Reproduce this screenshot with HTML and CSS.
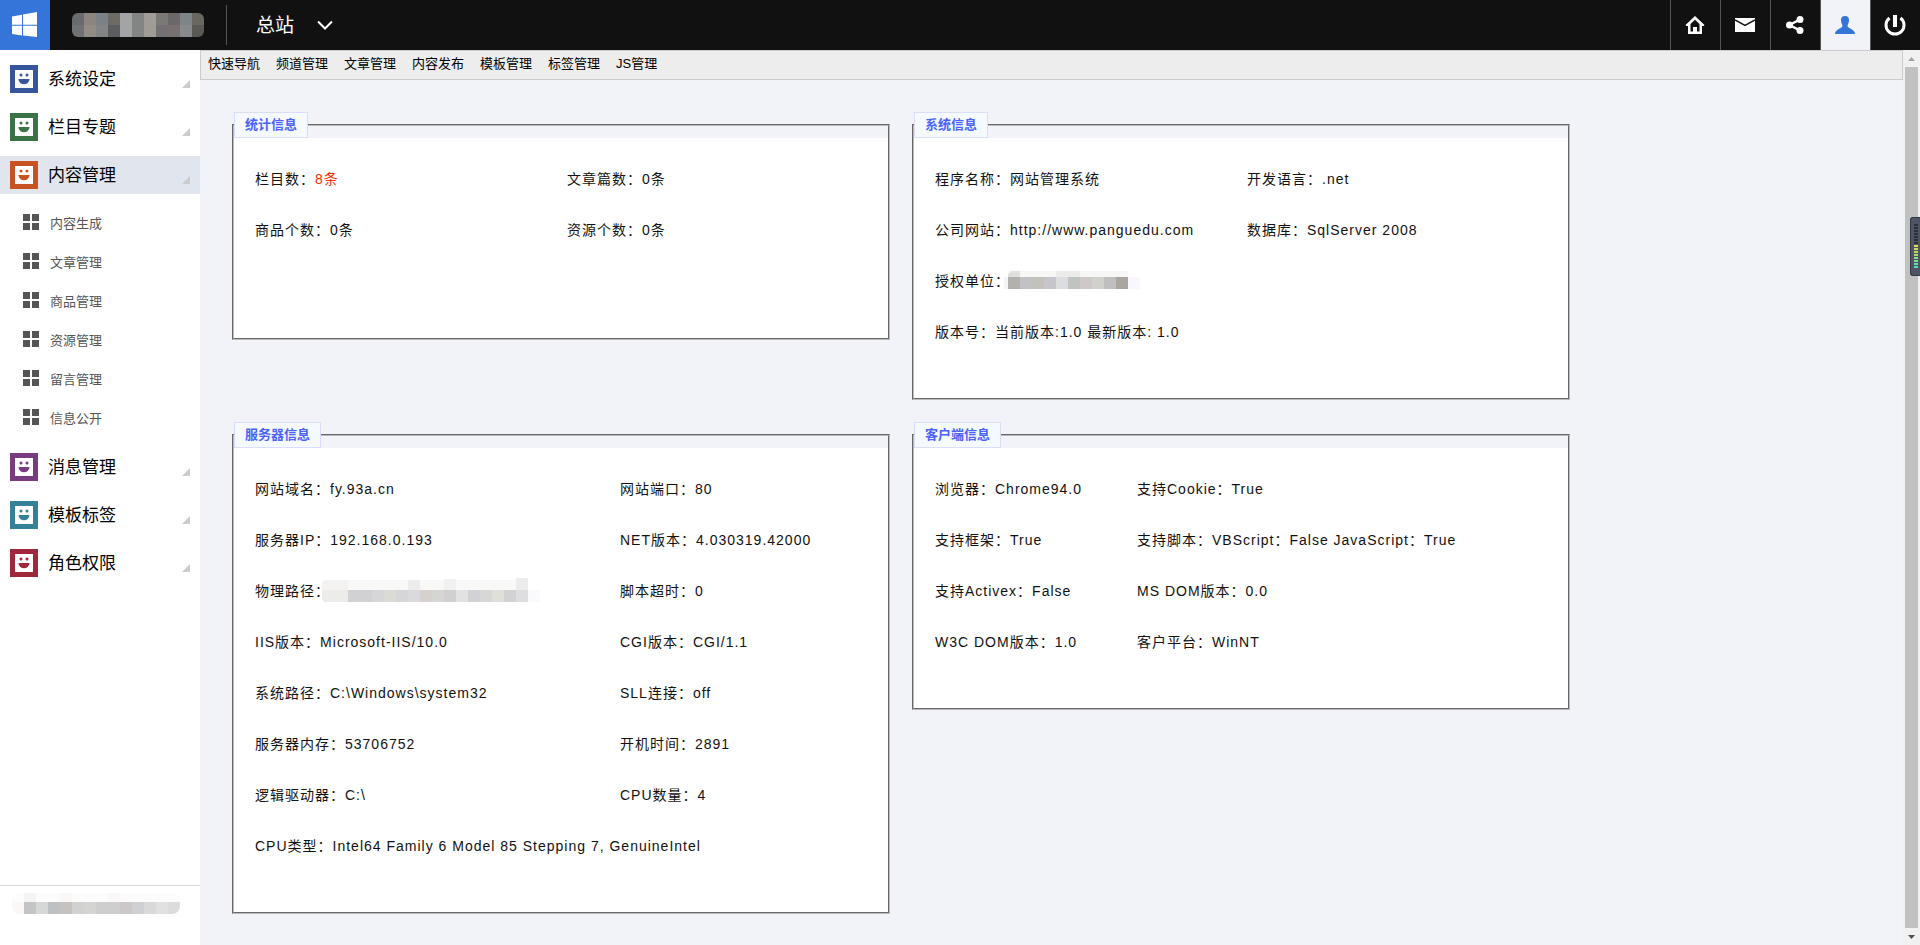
FILE: index.html
```
<!DOCTYPE html>
<html lang="zh-CN">
<head>
<meta charset="utf-8">
<title>网站管理系统</title>
<link rel="stylesheet" href="styles.css">
</head>
<body>
<svg class="defs" width="0" height="0" aria-hidden="true">
  <symbol id="face" viewBox="0 0 18 18">
    <rect width="18" height="18" fill="#fff"/>
    <circle cx="6" cy="5" r="1.500" fill="currentColor"/>
    <circle cx="12" cy="5" r="1.500" fill="currentColor"/>
    <path d="M3.500 9h11a5.500 5.200 0 0 1-11 0z" fill="currentColor"/>
  </symbol>
  <symbol id="tiles" viewBox="0 0 18 18">
    <path d="M1 1h7v7H1zM10 1h7v7h-7zM1 10h7v7H1zM10 10h7v7h-7z" fill="currentColor"/>
  </symbol>
</svg>
<header class="topbar">
  <a class="logo" href="#" aria-label="首页">
    <svg width="26" height="26" viewBox="0 0 26 26" fill="#fff"><path d="M0 4.500l10-1.700v10H0zM11 2.500L25 0v12.800H11zM0 13.800h10v9.700L0 22zM11 13.800h14V25l-14-1.500z"/></svg>
  </a>
  <svg class="site-mask" width="132" height="24" viewBox="0 0 132 24" shape-rendering="crispEdges" aria-hidden="true">
    <path fill="#676b6f" d="M0 0h12v12H0z"/><path fill="#8b8580" d="M12 0h12v12H12z"/><path fill="#7b8287" d="M24 0h12v12H24z"/><path fill="#6d6b66" d="M36 0h12v12H36z"/><path fill="#a2a4a5" d="M48 0h12v24H48z"/><path fill="#838584" d="M60 0h12v24H60z"/><path fill="#a09b95" d="M72 0h12v24H72z"/><path fill="#7a7974" d="M84 0h12v12H84z"/><path fill="#6c6769" d="M96 0h12v12H96z"/><path fill="#7e8588" d="M108 0h12v12h-12z"/><path fill="#6a6760" d="M120 0h12v12h-12z"/>
    <path fill="#6e7275" d="M0 12h12v12H0z"/><path fill="#918c84" d="M12 12h12v12H12z"/><path fill="#818483" d="M24 12h12v12H24z"/><path fill="#5c5d60" d="M36 12h12v12H36z"/><path fill="#727073" d="M84 12h12v12H84z"/><path fill="#767170" d="M96 12h12v12H96z"/><path fill="#88898c" d="M108 12h12v12h-12z"/><path fill="#5a5955" d="M120 12h12v12h-12z"/>
  </svg>
  <button class="site-switch" type="button"><span class="label">总站</span>
    <svg width="16" height="10" viewBox="0 0 16 10" fill="none" stroke="#fff" stroke-width="2"><path d="M1 1.500l7 7 7-7"/></svg>
  </button>
  <nav class="tools" aria-label="工具">
    <a href="#" aria-label="首页"><svg width="20" height="20" viewBox="0 0 20 20"><path d="M10 1l9.500 9-1 1H17v8H3v-8H1.500l-1-1zM10 4.800L5.500 9v7.500H8V12h4v4.500h2.500V9z" fill="#fff" fill-rule="evenodd"/></svg></a>
    <a href="#" aria-label="邮件"><svg width="20" height="20" viewBox="0 0 20 20"><path d="M0 3h20v14H0z" fill="#fff"/><path d="M0 5l10 5.500L20 5" fill="none" stroke="#111" stroke-width="1.500"/></svg></a>
    <a href="#" aria-label="分享"><svg width="20" height="20" viewBox="0 0 20 20"><path d="M15 4.500L4.500 10 15 15.500" fill="none" stroke="#fff" stroke-width="2.500"/><g fill="#fff"><circle cx="4.500" cy="10" r="3.500"/><circle cx="15" cy="4.500" r="3.500"/><circle cx="15" cy="15.500" r="3.500"/></g></svg></a>
    <a class="current" href="#" aria-label="用户"><svg width="20" height="20" viewBox="0 0 20 20"><path d="M10 1c3 0 4.200 2 4 4.500-.2 3-1.500 4-1.500 5.500 0 2.500 7.500 3 7.500 8H0c0-5 7.500-5.500 7.500-8 0-1.500-1.300-2.500-1.500-5.500C5.800 3 7 1 10 1z" fill="#3475d9"/></svg></a>
    <a href="#" aria-label="退出"><svg width="22" height="22" viewBox="0 0 22 22" fill="none" stroke="#fff" stroke-width="3"><path d="M5.500 4a9 9 0 1 0 11 0"/><path d="M11 1v12" stroke-width="4"/></svg></a>
  </nav>
</header>
<div class="shell">
  <aside class="sidebar">
    <nav class="menu" aria-label="主菜单">
      <a class="menu-item" href="#"><span class="badge blue"><svg width="18" height="18"><use href="#face"/></svg></span><span class="label">系统设定</span></a>
      <a class="menu-item" href="#"><span class="badge green"><svg width="18" height="18"><use href="#face"/></svg></span><span class="label">栏目专题</span></a>
      <a class="menu-item open" href="#"><span class="badge orange"><svg width="18" height="18"><use href="#face"/></svg></span><span class="label">内容管理</span></a>
      <div class="submenu">
        <a href="#"><svg width="18" height="18"><use href="#tiles"/></svg>内容生成</a>
        <a href="#"><svg width="18" height="18"><use href="#tiles"/></svg>文章管理</a>
        <a href="#"><svg width="18" height="18"><use href="#tiles"/></svg>商品管理</a>
        <a href="#"><svg width="18" height="18"><use href="#tiles"/></svg>资源管理</a>
        <a href="#"><svg width="18" height="18"><use href="#tiles"/></svg>留言管理</a>
        <a href="#"><svg width="18" height="18"><use href="#tiles"/></svg>信息公开</a>
      </div>
      <a class="menu-item" href="#"><span class="badge purple"><svg width="18" height="18"><use href="#face"/></svg></span><span class="label">消息管理</span></a>
      <a class="menu-item" href="#"><span class="badge teal"><svg width="18" height="18"><use href="#face"/></svg></span><span class="label">模板标签</span></a>
      <a class="menu-item" href="#"><span class="badge red"><svg width="18" height="18"><use href="#face"/></svg></span><span class="label">角色权限</span></a>
    </nav>
    <footer class="sidebar-foot">
      <svg class="foot-mask" width="168" height="21" viewBox="0 0 168 21" shape-rendering="crispEdges" aria-hidden="true">
        <path fill="#fcfcfc" d="M0 0h168v9H0z"/><path fill="#f4f4f5" d="M12 0h12v9H12z"/><path fill="#f9f8f6" d="M48 0h12v9H48zM96 0h12v9H96z"/>
        <path fill="#faf8f4" d="M0 9h12v12H0z"/><path fill="#c2c4c6" d="M12 9h12v12H12z"/><path fill="#d5d8d6" d="M24 9h12v12H24z"/><path fill="#c0c0c0" d="M36 9h12v12H36z"/><path fill="#c5c2c0" d="M48 9h12v12H48z"/><path fill="#d1d1d2" d="M60 9h12v12H60z"/><path fill="#d4d5d2" d="M72 9h12v12H72z"/><path fill="#cecece" d="M84 9h24v12H84z"/><path fill="#cbc8c7" d="M108 9h12v12h-12z"/><path fill="#cfd0d4" d="M120 9h12v12h-12z"/><path fill="#d9d9d9" d="M132 9h12v12h-12z"/><path fill="#e1e1df" d="M144 9h12v12h-12z"/><path fill="#dcdcdc" d="M156 9h12v12h-12z"/>
      </svg>
    </footer>
  </aside>
  <main class="main">
    <nav class="quicknav" aria-label="快速导航">
      <span>快速导航</span>
      <a href="#">频道管理</a>
      <a href="#">文章管理</a>
      <a href="#">内容发布</a>
      <a href="#">模板管理</a>
      <a href="#">标签管理</a>
      <a href="#">JS管理</a>
    </nav>
    <div class="panels">
      <section class="panel">
        <h2>统计信息</h2>
        <div class="panel-body">
        <table>
          <colgroup><col class="half"><col></colgroup>
          <tr><td>栏目数：<span class="hot">8条</span></td><td>文章篇数：0条</td></tr>
          <tr><td>商品个数：0条</td><td>资源个数：0条</td></tr>
        </table>
        </div>
      </section>
      <section class="panel">
        <h2>系统信息</h2>
        <div class="panel-body">
        <table>
          <colgroup><col class="half"><col></colgroup>
          <tr><td>程序名称：网站管理系统</td><td>开发语言：.net</td></tr>
          <tr><td>公司网站：http://www.panguedu.com</td><td>数据库：SqlServer 2008</td></tr>
          <tr><td colspan="2"><span class="masked">授权单位：<svg class="value-mask" width="138" height="18" viewBox="0 0 138 18" shape-rendering="crispEdges" aria-hidden="true"><g transform="translate(2 0)"><path fill="#f7f7f6" d="M4 0h120v6H4z"/><path fill="#dfe0df" d="M7 0h9v6H4V3z"/><path fill="#ebebea" d="M52 0h24v6H52z"/><path fill="#f5f5f5" d="M0 6h4v12H0z"/><path fill="#b2b1ad" d="M4 6h12v12H4z"/><path fill="#c1c1c6" d="M16 6h12v12H16z"/><path fill="#c2c2ba" d="M28 6h12v12H28z"/><path fill="#c5c6cc" d="M40 6h12v12H40z"/><path fill="#dcdde0" d="M52 6h12v12H52z"/><path fill="#c1c3bf" d="M64 6h12v12H64z"/><path fill="#cfc8c9" d="M76 6h12v12H76z"/><path fill="#d0d1cb" d="M88 6h12v12H88z"/><path fill="#bfbfbf" d="M100 6h12v12h-12z"/><path fill="#aba5a0" d="M112 6h12v12h-12z"/><path fill="#f7f7fd" d="M124 6h12v12h-12z"/></g></svg></span></td></tr>
          <tr><td colspan="2">版本号：当前版本:1.0 最新版本: 1.0</td></tr>
        </table>
        </div>
      </section>
      <section class="panel">
        <h2>服务器信息</h2>
        <div class="panel-body">
        <table>
          <colgroup><col class="wide"><col></colgroup>
          <tr><td>网站域名：fy.93a.cn</td><td>网站端口：80</td></tr>
          <tr><td>服务器IP：192.168.0.193</td><td>NET版本：4.030319.42000</td></tr>
          <tr><td><span class="masked">物理路径：<svg class="value-mask" width="218" height="24" viewBox="2 0 218 24" shape-rendering="crispEdges" aria-hidden="true"><path fill="#f8f8f7" d="M4 2h204v10H0V6z"/><path fill="#f3f2f0" d="M4 2h24v10H0V6z"/><path fill="#ececed" d="M88 2h12v10H88zM196 0h12v12h-12z"/><path fill="#f2f0f0" d="M124 1h12v11h-12z"/><path fill="#ececeb" d="M0 12h28v12H4l-4-4z"/><path fill="#d1d0d2" d="M28 12h24v12H28z"/><path fill="#d6d6d8" d="M52 12h12v12H52z"/><path fill="#dbdbd5" d="M64 12h12v12H64z"/><path fill="#d6d6d9" d="M76 12h12v12H76z"/><path fill="#dadade" d="M88 12h12v12H88z"/><path fill="#d6d1cf" d="M100 12h12v12h-12z"/><path fill="#d3d6d3" d="M112 12h12v12h-12z"/><path fill="#d2cfd2" d="M124 12h12v12h-12z"/><path fill="#e2e2e2" d="M136 12h12v12h-12z"/><path fill="#d2d2d6" d="M148 12h12v12h-12z"/><path fill="#d7d7d7" d="M160 12h12v12h-12z"/><path fill="#dfe0da" d="M172 12h12v12h-12z"/><path fill="#d2d2d4" d="M184 12h12v12h-12z"/><path fill="#dedee0" d="M196 12h12v12h-12z"/><path fill="#fafafc" d="M208 12h12v12h-12z"/></svg></span></td><td>脚本超时：0</td></tr>
          <tr><td>IIS版本：Microsoft-IIS/10.0</td><td>CGI版本：CGI/1.1</td></tr>
          <tr><td>系统路径：C:\Windows\system32</td><td>SLL连接：off</td></tr>
          <tr><td>服务器内存：53706752</td><td>开机时间：2891</td></tr>
          <tr><td>逻辑驱动器：C:\</td><td>CPU数量：4</td></tr>
          <tr><td colspan="2">CPU类型：Intel64 Family 6 Model 85 Stepping 7, GenuineIntel</td></tr>
        </table>
        </div>
      </section>
      <section class="panel">
        <h2>客户端信息</h2>
        <div class="panel-body">
        <table>
          <colgroup><col class="narrow"><col></colgroup>
          <tr><td>浏览器：Chrome94.0</td><td>支持Cookie：True</td></tr>
          <tr><td>支持框架：True</td><td>支持脚本：VBScript：False JavaScript：True</td></tr>
          <tr><td>支持Activex：False</td><td>MS DOM版本：0.0</td></tr>
          <tr><td>W3C DOM版本：1.0</td><td>客户平台：WinNT</td></tr>
        </table>
        </div>
      </section>
    </div>
  </main>
  <div class="scrollbar" aria-hidden="true">
    <svg width="17" height="17" viewBox="0 0 17 17"><path d="M5 11l3.500-4 3.500 4z" fill="#a3a3a3"/></svg>
    <div class="thumb"></div>
    <svg width="17" height="18" viewBox="0 0 17 18"><path d="M5 7l3.500 4L12 7z" fill="#505050"/></svg>
    <div class="meter"><span class="meter-bars"></span></div>
  </div>
</div>
</body>
</html>
```
FILE: styles.css
```
* { box-sizing: border-box; }
body {
  margin: 0;
  min-height: 100vh;
  display: flex;
  flex-direction: column;
  background: #f2f3f8;
  color: #111;
  font-family: "Liberation Sans", "Noto Sans CJK SC", sans-serif;
  font-size: 14px;
}
a { color: inherit; text-decoration: none; }
svg { display: block; flex: none; }
.defs { position: absolute; }

.topbar { display: flex; align-items: center; height: 50px; background: #111; color: #fff; }
.logo { display: grid; place-items: center; width: 50px; height: 50px; background: #3575d9; }
.site-mask { margin: 0 22px; border-radius: 6px; }
.site-switch {
  display: flex;
  align-items: center;
  gap: 23px;
  height: 40px;
  padding: 0 0 0 29px;
  border: 0;
  border-left: 1px solid #555;
  background: none;
  color: #fff;
  font: inherit;
  font-size: 19px;
}
.label { padding-bottom: 3px; }
.tools { display: flex; margin-left: auto; }
.tools a { display: grid; place-items: center; width: 50px; height: 50px; padding-right: 2px; border-left: 1px solid #555; }
.tools .current { background: #f2f3f8; }

.shell { display: flex; flex: 1; }
.sidebar { display: flex; flex-direction: column; width: 200px; background: #fff; }
.menu { display: flex; flex-direction: column; gap: 10px; padding-top: 10px; }
.menu-item {
  display: flex;
  align-items: center;
  gap: 10px;
  height: 38px;
  padding: 0 10px;
  color: #000;
  font-size: 17px;
}
.menu-item::after {
  content: "";
  align-self: flex-end;
  margin: 0 0 10px auto;
  border: 4px solid #ccc;
  border-top-color: transparent;
  border-left-color: transparent;
}
.menu-item.open { background: #e1e5ee; }
.badge { display: grid; place-items: center; width: 28px; height: 28px; }
.blue { background: #36559b; color: #36559b; }
.green { background: #3a7446; color: #3a7446; }
.orange { background: #c85222; color: #c85222; }
.purple { background: #793c80; color: #793c80; }
.teal { background: #358199; color: #358199; }
.red { background: #a1273b; color: #a1273b; }
.submenu a {
  display: flex;
  align-items: center;
  gap: 10px;
  height: 39px;
  padding: 0 0 3px 22px;
  color: #555;
  font-size: 13px;
}
.sidebar-foot { height: 61px; margin-top: auto; padding: 7px 12px; border-top: 1px solid #d9d9d9; }
.foot-mask { border-radius: 8px; }

.main { flex: 1; min-width: 0; }
.quicknav {
  display: flex;
  gap: 16px;
  height: 30px;
  padding: 0 7px;
  border: 1px solid #ccc;
  background: #ededed;
  color: #000;
  font-size: 13px;
  line-height: 26px;
}
.panels {
  display: grid;
  grid-template-columns: repeat(auto-fill, 658px);
  gap: 22px;
  align-items: start;
  padding: 32px;
}
.panel { position: relative; padding-top: 12px; }
.panel h2 {
  position: absolute;
  top: 0;
  left: 2px;
  height: 26px;
  margin: 0;
  padding: 0 10px;
  border: 1px solid #dcdcfb;
  background: #f4faff;
  color: #4c62ff;
  font-size: 13px;
  line-height: 24px;
}
.panel-body {
  min-height: 216px;
  padding: 26px 14px 42px 21px;
  border: 2px groove #bbb;
  background: linear-gradient(#f2f3f8 12px, #fff 12px);
}
.panel table { width: 100%; table-layout: fixed; border-collapse: collapse; }
.panel td { height: 51px; padding: 0; letter-spacing: 1px; white-space: nowrap; }
.half { width: 312px; }
.wide { width: 365px; }
.narrow { width: 202px; }
.hot { color: #f82e08; }
.masked { display: flex; align-items: center; }
.value-mask { margin-left: -8px; }

.scrollbar { position: relative; display: flex; flex-direction: column; width: 17px; background: #f1f1f1; }
.thumb { flex: 1; margin: 0 2px; background: #c1c1c1; }
.meter {
  position: absolute;
  top: 167px;
  right: 0;
  width: 10px;
  height: 59px;
  padding: 6px 2px 6px 3px;
  border: 1px solid #343843;
  border-right: 0;
  border-radius: 3px 0 0 3px;
  background: #4f5564;
}
.meter-bars {
  display: block;
  height: 100%;
  background:
    repeating-linear-gradient(transparent 0 2px, #4f5564 2px 3px),
    linear-gradient(#2c2f38 44%, #f0dc3c 44%, #a0e070 70%, #48dcc8);
}
```
